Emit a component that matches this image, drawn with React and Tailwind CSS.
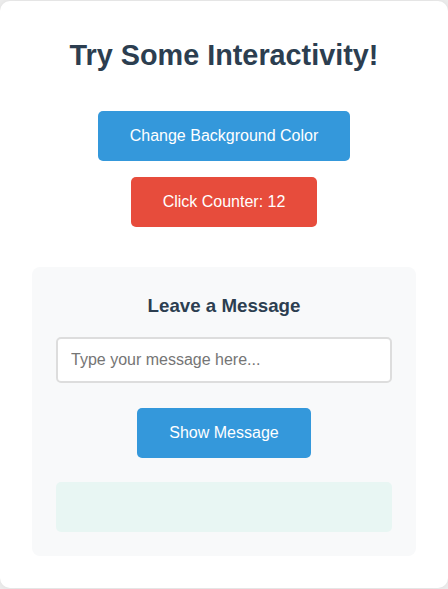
export default function App() {
  return (
    <div className="min-h-[589px] bg-[#eeeeee] pt-[1px] font-['Liberation_Sans',Arial,sans-serif]">
      <div className="h-[587px] rounded-[10px] bg-white shadow-[0_0_8px_rgba(0,0,0,0.08)] px-[32px] pt-[37px] flex flex-col items-center">
        <h1 className="text-[28.8px] leading-[34px] font-bold text-[#2c3e50] text-center">
          Try Some Interactivity!
        </h1>
        <button className="mt-[39px] h-[50px] w-[252px] rounded-[5px] bg-[#3498db] text-white text-[16px] leading-[18px]">
          Change Background Color
        </button>
        <button className="mt-[16px] h-[50px] w-[186px] rounded-[5px] bg-[#e74c3c] text-white text-[16px] leading-[18px]">
          Click Counter: 12
        </button>
        <div className="mt-[40px] w-full h-[289px] rounded-[8px] bg-[#f8f9fa] px-[24px] pt-[28px] flex flex-col items-center">
          <h3 className="text-[18.72px] leading-[21.5px] font-bold text-[#2c3e50] text-center">
            Leave a Message
          </h3>
          <input
            type="text"
            placeholder="Type your message here..."
            className="mt-[20.5px] h-[46px] w-full rounded-[5px] border-2 border-[#dddddd] bg-white px-[13px] text-[16px] text-[#333] placeholder:text-[#757575] outline-none"
          />
          <button className="mt-[25px] h-[50px] w-[174px] rounded-[5px] bg-[#3498db] text-white text-[16px] leading-[18px]">
            Show Message
          </button>
          <div className="mt-[24px] h-[50px] w-full rounded-[5px] bg-[#e8f6f3]"></div>
        </div>
      </div>
    </div>
  );
}
